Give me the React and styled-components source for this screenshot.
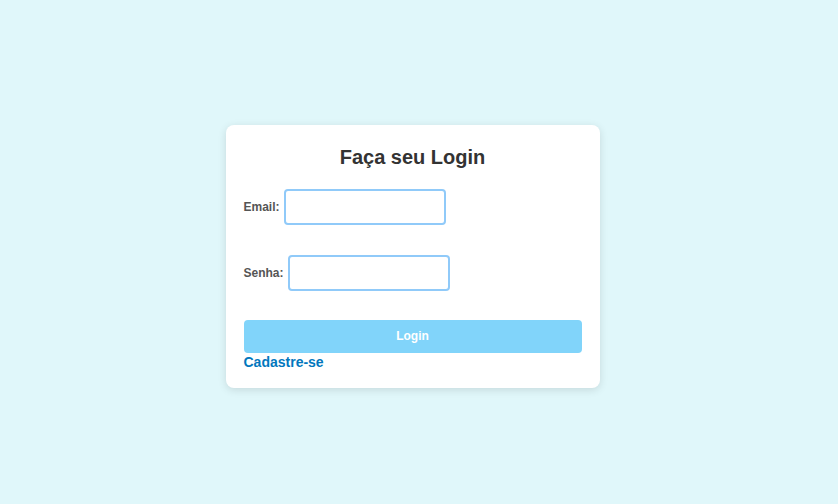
import styled, { createGlobalStyle } from 'styled-components';

const GlobalStyle = createGlobalStyle`
  html, body {
    margin: 0;
    padding: 0;
    height: 100%;
  }
  body {
    background: #e0f7fa;
    font-family: "Liberation Sans", Arial, sans-serif;
  }
  #root {
    height: 100%;
  }
`;

export default function App() {
  return (
    <>
      <GlobalStyle />
      <Page>
        <Card>
          <Title>Faça seu Login</Title>
          <Field>
            <Label htmlFor="email">Email:</Label>
            <Input id="email" type="email" />
          </Field>
          <Field>
            <Label htmlFor="senha">Senha:</Label>
            <Input id="senha" type="password" />
          </Field>
          <Button type="button">Login</Button>
          <Link href="#">Cadastre-se</Link>
        </Card>
      </Page>
    </>
  );
}

const Page = styled.div`
  height: 504px;
  display: flex;
  align-items: center;
  justify-content: center;
`;

const Card = styled.div`
  width: 374px;
  box-sizing: border-box;
  padding: 20px 18px 18px;
  background: #fff;
  border-radius: 8px;
  box-shadow: 0 2px 8px rgba(0, 0, 0, 0.12);
  display: flex;
  flex-direction: column;
  margin: 8px 13px 0 0;
`;

const Title = styled.h2`
  margin: 0 0 20px;
  text-align: center;
  font-size: 20px;
  line-height: 24px;
  font-weight: bold;
  color: #333;
`;

const Field = styled.div`
  display: flex;
  align-items: center;
  gap: 4px;
  margin-bottom: 30px;
`;

const Label = styled.label`
  font-size: 12px;
  font-weight: bold;
  color: #555;
`;

const Input = styled.input`
  width: 162px;
  height: 36px;
  box-sizing: border-box;
  border: 2px solid #90caf9;
  border-radius: 4px;
  outline: none;
  padding: 0 6px;
`;

const Button = styled.button`
  height: 33px;
  margin-top: -1px;
  border: none;
  border-radius: 4px;
  background: #81d4fa;
  color: #fff;
  font-family: inherit;
  font-size: 12px;
  font-weight: bold;
  cursor: pointer;
`;

const Link = styled.a`
  margin-top: 1px;
  font-size: 14px;
  line-height: 16px;
  font-weight: bold;
  color: #0277bd;
  text-decoration: none;
  align-self: flex-start;
`;
